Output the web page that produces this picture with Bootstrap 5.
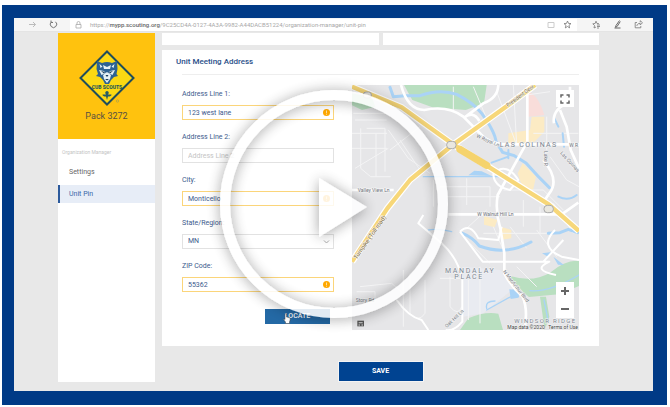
<!DOCTYPE html>
<html lang="en">
<head>
<meta charset="utf-8">
<meta name="viewport" content="width=device-width, initial-scale=1">
<title>Unit Pin</title>
<link href="https://cdn.jsdelivr.net/npm/bootstrap@5.3.0/dist/css/bootstrap.min.css" rel="stylesheet">
<style>
  body { font-family: Roboto, "Liberation Sans", sans-serif; font-size: 7px; line-height: 9px; color: #3c5a8c; background: #fff; }
  .video-frame { background: #003a86; margin: 5px 3px 3px 2px; padding: 13px 14px 14px 12px; }
  .screen { background: #e8e8e8; }
  .browser-bar { background: #f5f5f5; height: 14px; padding-left: 13px; padding-right: 10px; color: #999; border-bottom: 1px solid #e4e4e4; }
  .browser-bar svg { display: block; flex: none; }
  .tool { padding: 0; border: 0; background: none; color: #666; }
  .address { background: #fff; height: 12px; color: #a8a8a8; font-size: 6px; margin-left: 12px; margin-right: 15px; padding: 0 5px; }
  .address strong { color: #666; font-weight: 500; }
  .page-body { padding: 1px 54px 9px 44px; gap: 7px; }
  .side { width: 97px; background: #fff; flex: none; }
  .unit-box { background: #ffc20e; height: 106px; color: #585043; font-size: 9px; line-height: 12px; padding-top: 17px; }
  .unit-box svg { display: block; margin: 0 auto 4px; }
  .side-caption { font-size: 5px; color: #c4c4c4; padding: 9px 0 6px 4px; }
  .side-link { height: 18px; padding-left: 11px; margin-bottom: 4px; color: #666; text-decoration: none; }
  .side-link.current { background: #e7edf7; color: #3a66a8; border-left: 2px solid #2c5a9c; padding-left: 9px; }
  .stub { background: #fff; height: 12px; }
  .panel { background: #fff; margin-top: 5px; padding: 7px 20px 16px 14px; }
  .panel-title { font-size: 8px; line-height: 10px; font-weight: 500; color: #2a4f89; margin: 0 0 7px; }
  .panel-inner { margin-left: 6px; border-top: 1px solid #eee; padding-top: 10px; gap: 18px; }
  .fields { width: 152px; flex: none; padding-top: 5px; }
  .field { margin-bottom: 13px; position: relative; }
  .field label { display: block; line-height: 9px; margin-bottom: 6px; }
  .field .form-control, .field .form-select { height: 15px; min-height: 0; font-size: 7px; line-height: 9px; padding: 0 5px; border: 1px solid #e2e2e2; border-radius: 0; color: #3c5a8c; background-image: none; }
  .field .form-control::placeholder { color: #c4c4c4; }
  .field .warned { border-color: #fbd57a; }
  .field-mark { position: absolute; right: 4px; bottom: 4px; }
  .locate { display: block; width: 65px; height: 15px; margin: 17px 4px 0 auto; font-size: 7px; line-height: 9px; padding: 0; border: 0; border-radius: 0; background: #2469a5; color: #fff; font-weight: 500; position: relative; }
  .locate svg { position: absolute; left: 18px; top: 4px; }
  .map svg { display: block; width: 100%; height: auto; }
  .map-holder { position: relative; }
  .map-tool { position: absolute; right: 5px; width: 18px; height: 17px; background: #fff; border: 0; padding: 0; color: #666; }
  .map .map-tool svg { margin: auto; width: 10px; }
  .full { top: 5px; }
  .plus { bottom: 30px; height: 18px; }
  .minus { bottom: 12px; height: 18px; }
  .save { width: 86px; height: 21px; margin: 15px auto 0; font-size: 7px; line-height: 9px; font-weight: 700; background: #004391; color: #fff; border: 1px solid #f4f4f4; border-radius: 0; padding: 0; }
  .play { position: absolute; left: 50%; top: 50%; width: 276px; height: 276px; margin: -139px; border: 0; padding: 0; background: none; }
  .play svg { display: block; }
</style>
<script src="https://cdn.jsdelivr.net/npm/bootstrap@5.3.0/dist/js/bootstrap.bundle.min.js"></script>
</head>
<body>
<main class="video-frame position-relative overflow-hidden">
  <div class="screen">
    <div class="browser-bar d-flex align-items-center">
      <button class="tool" type="button" aria-label="Forward"><svg width="10" height="9" viewBox="0 0 10 9" fill="none" stroke="#bbb"><path d="M2 4.500h6.500M6 2l2.500 2.500L6 7"/></svg></button>
      <button class="tool ms-2 ps-1" type="button" aria-label="Reload"><svg width="9" height="9" viewBox="0 0 9 9" fill="none" stroke="#777"><path d="M2.500 1.800a3.200 3.200 0 1 0 4 0M2 .5v2h2"/></svg></button>
      <div class="address d-flex align-items-center flex-grow-1">
        <svg width="7" height="8" viewBox="0 0 7 8" fill="none" stroke="#aaa" stroke-width=".8"><path d="M1 3.500h5V7H1zM2 3.500V2a1.500 1.500 0 0 1 3 0v1.500"/></svg>
        <span class="ms-2 text-nowrap">https://<strong>mypp.scouting.org</strong>/9C25CD4A-0127-4A3A-9982-A44DACB51224/organization-manager/unit-pin</span>
        <svg class="ms-auto" width="8" height="8" viewBox="0 0 8 8" fill="none" stroke="#ccc"><path d="M1 1.500h6v5H1z"/></svg>
        <svg class="ms-2" width="9" height="9" viewBox="0 0 9 9" fill="none" stroke="#777" stroke-width=".8"><path d="M4.500 1l1 2.400 2.500.2-2 1.700.6 2.600-2.100-1.400-2.200 1.400.7-2.600L1 3.600l2.500-.2z"/></svg>
      </div>
      <button class="tool" type="button" aria-label="Favorites"><svg width="9" height="9" viewBox="0 0 9 9" fill="none" stroke="#777" stroke-width=".8"><path d="M4 7L2 8l.5-2.500L.8 3.800l2.300-.3L4 1.200l1 2.300 2 .2M5 5h3M5 6.500h3M5 8h2"/></svg></button>
      <button class="tool ms-2 ps-1" type="button" aria-label="Notes"><svg width="9" height="9" viewBox="0 0 9 9" fill="none" stroke="#666"><path d="M6.500.5L3 5.500l-.5 1.800 1.600-.8 3.200-5M1.500 8h6"/></svg></button>
      <button class="tool ms-2 ps-1" type="button" aria-label="Share"><svg width="9" height="9" viewBox="0 0 9 9" fill="none" stroke="#777" stroke-width=".8"><path d="M3 2.500H1.200v5.300h5.600V6M2.800 6c.3-2 1.600-2.600 3.400-2.600V5L8.500 2.700 6.200.7v1.600"/></svg></button>
    </div>

    <div class="page-body d-flex">
      <nav class="side">
        <div class="unit-box text-center">
          <svg width="56" height="56" viewBox="0 0 56 56">
            <path d="M28 1.500L54.500 28 28 54.500 1.500 28z" fill="#fbd913" stroke="#1f4d5c" stroke-width="2"/>
            <path d="M18 11l5 2q5-2 10 0l5-2 .5 8-1 5 1.500 2-4 1-3 3-2 4h-4l-2-4-3-3-4-1 2-2-1.500-5z" fill="#2d6292"/>
            <path d="M20.500 14l3 2.500-2 1.500zM35.500 14l-3 2.500 2 1.500zM24 15l4 2 4-2-1 4h-6zM20 20l5 1 1.500 2-4 2zM36 20l-5 1-1.500 2 4 2zM24 25l4-3 4 3-1 4-3 4-3-4z" fill="#e5f1f5"/>
            <path d="M22 21l4 1-1 1.500zM34 21l-4 1 1 1.500zM26.500 25h3L28 27zM26 29h4l-2 1.500z" fill="#173957"/>
            <text x="28" y="39" text-anchor="middle" font-size="5" font-weight="900" fill="#285b55">CUB SCOUTS</text>
            <path d="M28 41q3 1 1 3.500h3.500q0 2-3.500 2L28 50l-1-3.500q-3.500 0-3.500-2H27Q25 42 28 41z" fill="#255c65"/>
            <circle cx="38.500" cy="51" r="1.200" fill="none" stroke="#9d9a54" stroke-width=".6"/>
          </svg>
          <div>Pack 3272</div>
        </div>
        <div class="side-caption">Organization Manager</div>
        <a class="side-link d-flex align-items-center" href="#settings">Settings</a>
        <a class="side-link current d-flex align-items-center" href="#pin" aria-current="page">Unit Pin</a>
      </nav>

      <div class="flex-grow-1">
        <div class="d-flex gap-1"><div class="stub flex-fill"></div><div class="stub flex-fill"></div></div>
        <section class="panel">
          <h1 class="panel-title">Unit Meeting Address</h1>
          <div class="panel-inner d-flex">
            <form class="fields">
              <div class="field"><label for="a1">Address Line 1:</label><input id="a1" class="form-control warned" value="123 west lane"><svg class="field-mark" width="7" height="7" viewBox="0 0 7 7"><circle cx="3.500" cy="3.500" r="3.500" fill="#ffa800"/><path d="M3.500 1.500v2.500M3.500 4.700v1" stroke="#ffe0a0"/></svg></div>
              <div class="field"><label for="a2">Address Line 2:</label><input id="a2" class="form-control" placeholder="Address Line 2"></div>
              <div class="field"><label for="city">City:</label><input id="city" class="form-control warned" value="Monticello"><svg class="field-mark" width="7" height="7" viewBox="0 0 7 7"><circle cx="3.500" cy="3.500" r="3.500" fill="#ffa800"/><path d="M3.500 1.500v2.500M3.500 4.700v1" stroke="#ffe0a0"/></svg></div>
              <div class="field"><label for="st">State/Region:</label><select id="st" class="form-select"><option>MN</option></select><svg class="field-mark" width="7" height="7" viewBox="0 0 7 7" fill="none" stroke="#aaa"><path d="M1 2.500l2.500 2.500L6 2.500"/></svg></div>
              <div class="field"><label for="zip">ZIP Code:</label><input id="zip" class="form-control warned" value="55362"><svg class="field-mark" width="7" height="7" viewBox="0 0 7 7"><circle cx="3.500" cy="3.500" r="3.500" fill="#ffa800"/><path d="M3.500 1.500v2.500M3.500 4.700v1" stroke="#ffe0a0"/></svg></div>
              <button class="locate" type="button">LOCATE
                <svg width="8" height="11" viewBox="0 0 8 11"><path d="M2 1q1-1 1.500 0v3l3 .8q1 .4.700 2L6.500 9v1.500h-4V9L.5 6.500q0-1.200 1.500 0z" fill="#fff" stroke="#444" stroke-width=".5"/></svg>
              </button>
            </form>
            <div class="map flex-grow-1">
              <div class="map-holder">
                <svg viewBox="36 45 681 735" role="img" aria-label="Map of Las Colinas">
                  <path fill="#e6e6e8" d="M36 45h681v735H36z"/>
                  <path fill="#e9ebf1" d="M370 590l110 10 60 40-110 90-60 10z"/>
                  <g fill="#b9dfc0">
                    <path d="M192 45h248l-8 55-55 20-100-8-60-22z"/>
                    <path d="M36 70l60 12 10 28-40 10-30-14z"/>
                    <path d="M510 618q70 20 120-10 50-40 87-35v75l-60 25-90 8q-30-20-57-63z"/>
                    <path d="M360 780l25-35q50-22 90-14l14 49zM600 680l18 0 10 60-14 40z"/>
                  </g>
                  <path fill="#f9ddda" d="M565 65q30 10 48 70l-48 5z"/>
                  <path fill="#fcebc4" d="M505 190l65-10 5-40h38v45l-30 30-78 8zM548 280l40 40-10 45-30-10-15-45zM432 438l40 12-8 22-32-8zM482 470l32 10v25l-30 4z"/>
                  <g fill="none" stroke="#f4f4f5" stroke-width="3">
                    <path d="M36 190h105M40 130h100M45 150h95M62 175v120l30 25h60M80 175h55v130M108 190v130M36 235h105M45 295l100-60M145 180l60 85 65 45M180 210l60 90M150 240l90-70M340 50v70M400 50l50 120M470 65l60 160M520 45l10 180M580 190h135M620 140v100M560 75l70-10M280 330v80M300 350h150v60M320 380h160M380 325v80"/>
                    <path d="M490 360h120l60 60M430 490h220M460 470l30 70M510 470l50 65M590 480l60 80M440 420l-60 55M60 650l95-10 40 35M50 665h55v30M190 600v170M210 610v120q25 30 45 0v-100M330 620v90q25 30 35 0M300 625h60M385 630v120M420 590v170M530 590l60 60M550 390v80M600 410v80M630 260l50 70 37 20M640 400l60 90M390 520l60 60"/>
                  </g>
                  <g fill="none" stroke="#aad3f6" stroke-linecap="round" stroke-linejoin="round">
                    <path stroke-width="9" d="M150 52l10 28 35-3h45q60-22 110-4 50 25 75 57 40 55 43 85l20 32 35 10 35 22q35 40 70 74"/>
                    <path stroke-width="6" d="M455 278l50-18M505 240v25M643 145l12 25M668 190l4 40M655 380q30 15 55-5"/>
                    <path stroke-width="9" d="M368 490q30 12 50 38 80 30 155-12M625 490l35-2 25-10 28 10"/>
                    <path stroke-width="4" d="M265 480q25-5 70 5M440 715q-5-22 25-22M440 720l90-50M520 660l15 20"/>
                    <path stroke-width="4" d="M250 320h240M570 662q60 5 147-47M612 690l12 60"/>
                  </g>
                  <path fill="#aad3f6" d="M385 316l18-14 22 2 30 14zM508 658l32 3-5 22-23 4zM606 550l30-4-12 14zM640 560l32 25-18-1z"/>
                  <g fill="none" stroke="#fff" stroke-width="8" stroke-linejoin="round">
                    <path d="M183 45q20 75 70 75 70-15 117 20l52 52q20 24 68 31h227M475 45q-2 40-45 55l-60 45M370 145q30-25 48 8M562 65v150L473 375q-8 50 8 100l12 75v60q20 40 55 70 17 40 5 100M610 270q50 60 18 100l-20 30M36 360h125M325 433h340l50-35M660 120l20 50 12 70 25 55M690 50v45q-55 22-48 65"/>
                    <path stroke-width="6" d="M250 435l-15 25 70 60q50 45 62 110v125q-25 30-50 25M360 485q30-30 55 20l60 5 10-40M360 485l68 90h200q-55 25 20 40M460 310q40-35 75 20l-25 30q-50-10-50-50M645 480q-50 50 20 80l52 10M170 690q35 50 75 60l20 30M610 575l60-65"/>
                  </g>
                  <g fill="none" stroke-linejoin="round">
                    <path stroke="#fff" stroke-width="20" d="M36 50L185 112l150 108 105 67 186 116 91 80M585 45L498 110 334 228 210 330l-68 85L36 575"/>
                    <path stroke="#f7d779" stroke-width="13" d="M36 50L185 112l150 108 105 67 186 116 91 80M585 45L498 110 334 228 210 330l-68 85L36 575"/>
                    <path stroke="#f5d36d" stroke-width="22" d="M360 238l80 48" stroke-linecap="round"/>
                  </g>
                  <g fill="#e9e7df" stroke="#aaa" stroke-width="3"><rect x="320" y="214" width="28" height="22" rx="10"/><rect x="612" y="406" width="28" height="22" rx="10"/><rect x="70" y="66" width="24" height="18" rx="8"/></g>
                  <g fill="#727780" stroke="#f4f4f4" stroke-width="3" paint-order="stroke" font-size="15">
                    <text x="479" y="230" font-size="21" letter-spacing="4" fill="#7b8592">LAS COLINAS</text>
                    <text x="315" y="608" font-size="21" letter-spacing="5" fill="#7b8592">MANDALAY</text>
                    <text x="343" y="628" font-size="21" letter-spacing="5" fill="#7b8592">PLACE</text>
                    <text x="523" y="759" font-size="18" letter-spacing="4" fill="#7b8592">WINDSOR RIDGE</text>
                    <text x="53" y="365">Valley View Ln</text>
                    <text x="412" y="438">W Walnut Hill Ln</text>
                    <text x="47" y="697">Story Rd</text>
                    <text transform="translate(504 111) rotate(-37)" fill="#806b38" font-size="15">President Geor</text>
                    <text transform="translate(50 569) rotate(-55)" fill="#806b38" font-size="18">Turnpike (Toll road)</text>
                    <text transform="translate(408 202) rotate(23)">W Royal Ln</text>
                    <text transform="translate(488 605) rotate(52)">N MacArthur Blvd</text>
                    <text transform="translate(320 774) rotate(-43)">Oak Hill Ln</text>
                    <text transform="translate(660 250) rotate(48)">Las Colinas</text>
                    <text transform="translate(612 243) rotate(90)">Lake R</text>
                    <text x="688" y="230">W R</text>
                    <text x="502" y="776" fill="#444">Map data ©2020</text>
                    <text x="625" y="776" fill="#444">Terms of Use</text>
                  </g>
                  <path fill="#555" d="M52 752h20v17H52z"/><path fill="#ddd" d="M56 757h12v3H56zM56 763h3v4h-3zM65 763h3v4h-3z"/>
                </svg>
                <button class="map-tool full" type="button" aria-label="Full screen"><svg viewBox="0 0 10 10" fill="none" stroke="#666" stroke-width="1.500"><path d="M1 3.500V1h2.500M6.500 1H9v2.500M9 6.500V9H6.500M3.500 9H1V6.500"/></svg></button>
                <button class="map-tool plus" type="button" aria-label="Zoom in"><svg viewBox="0 0 10 10" stroke="#666" stroke-width="2"><path d="M1 5h8M5 1v8"/></svg></button>
                <button class="map-tool minus" type="button" aria-label="Zoom out"><svg viewBox="0 0 10 10" stroke="#666" stroke-width="2"><path d="M1 5h8"/></svg></button>
              </div>
            </div>
          </div>
        </section>
        <button class="save d-block" type="button">SAVE</button>
      </div>
    </div>
  </div>
  <button class="play" type="button" aria-label="Play video">
    <svg viewBox="0 0 276 276">
      <defs><filter id="soft" x="-20%" y="-20%" width="140%" height="140%"><feDropShadow dx="0" dy="1" stdDeviation="7" flood-color="#000" flood-opacity=".42"/></filter></defs>
      <g filter="url(#soft)" opacity=".87">
        <circle cx="138" cy="138" r="109" fill="none" stroke="#fff" stroke-width="10"/>
        <path d="M123 112l48 29-48 30z" fill="#fff"/>
      </g>
    </svg>
  </button>
</main>
</body>
</html>
